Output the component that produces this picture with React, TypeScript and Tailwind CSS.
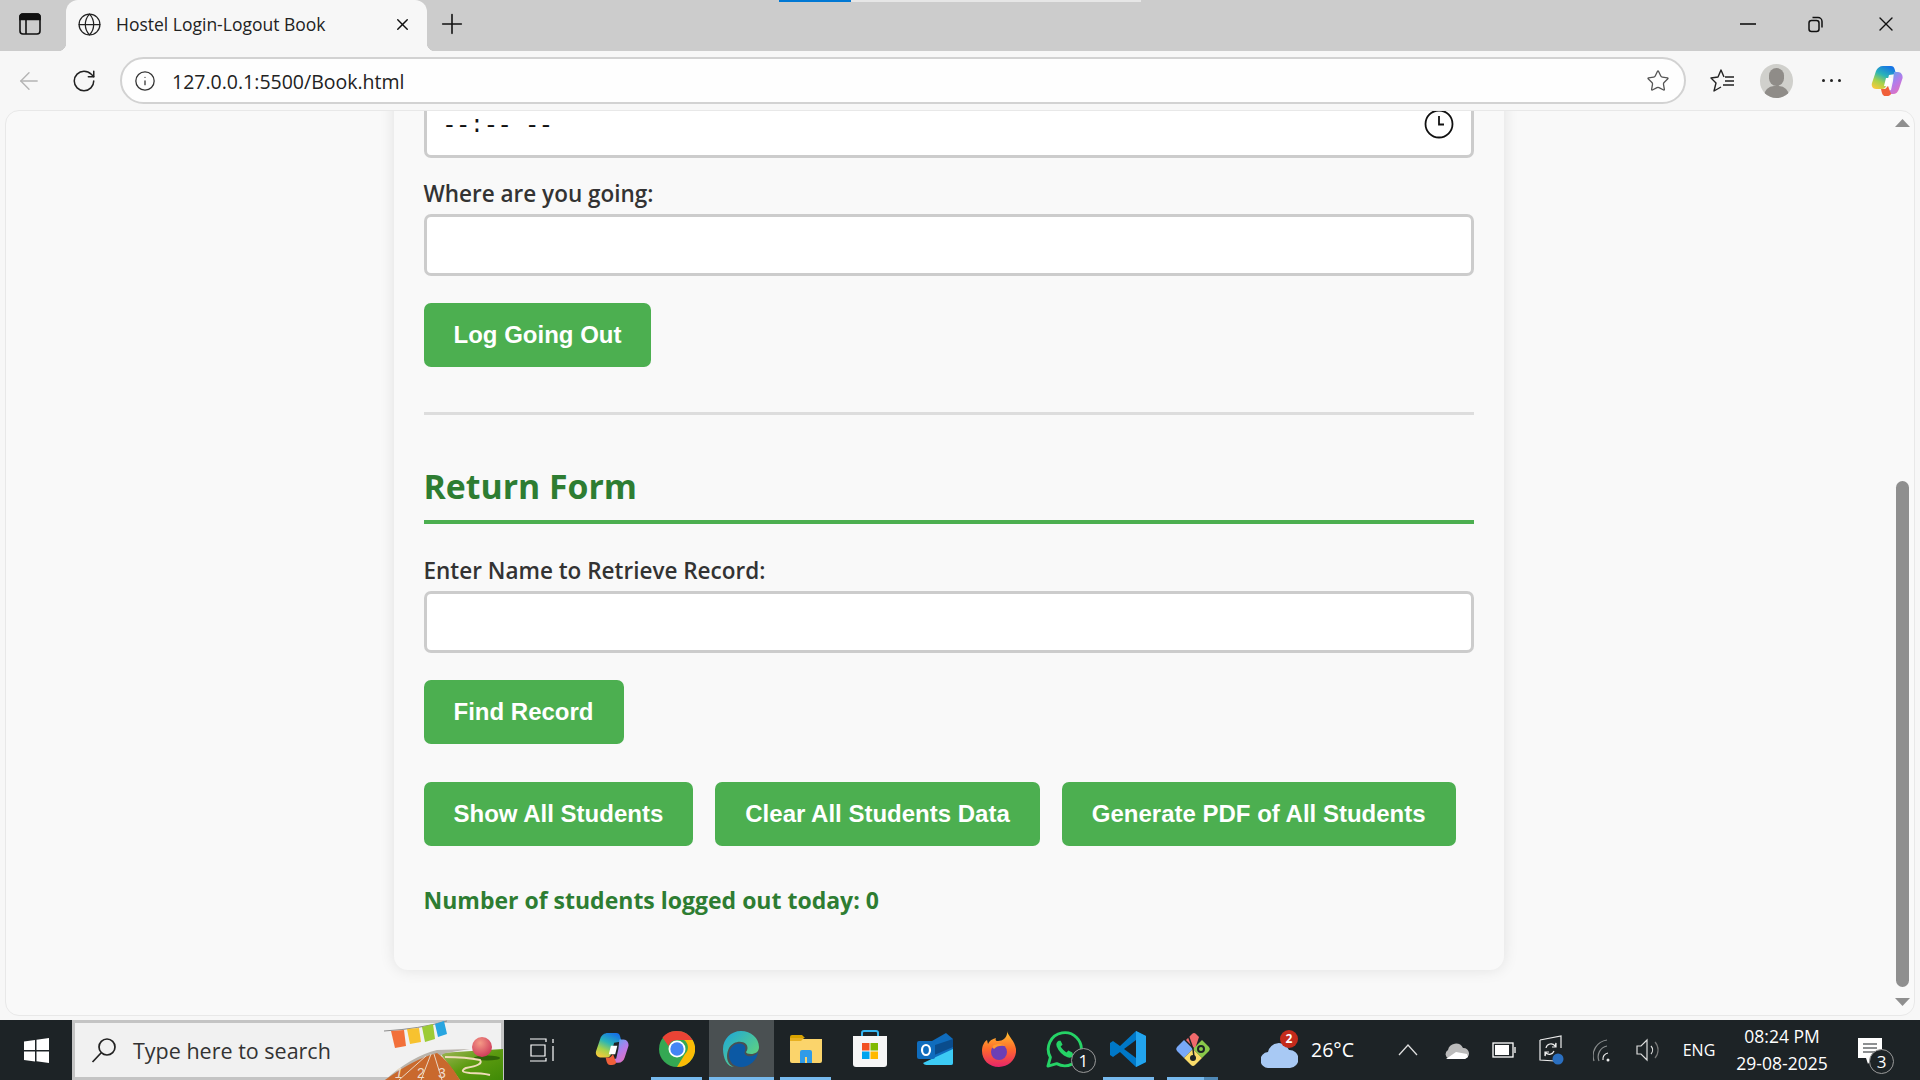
import { ArrowLeft, Globe, Info, Plus, RotateCw, Star, X } from "lucide-react";

const ui = "font-['Open_Sans',sans-serif]";
const arial = "font-['Liberation_Sans',sans-serif]";

function Copilot({ size = 34 }: { size?: number }) {
  return (
    <svg width={size} height={size} viewBox="0 0 34 34">
      <defs>
        <linearGradient id="cpA" x1="0.7" y1="0" x2="0.2" y2="1">
          <stop offset="0" stopColor="#1673e6" />
          <stop offset="0.4" stopColor="#29b4b8" />
          <stop offset="0.7" stopColor="#a6d24a" />
          <stop offset="1" stopColor="#f7c93c" />
        </linearGradient>
        <linearGradient id="cpB" x1="0.2" y1="0" x2="0.8" y2="1">
          <stop offset="0" stopColor="#5aa7f0" />
          <stop offset="0.5" stopColor="#b57bea" />
          <stop offset="1" stopColor="#e86fb8" />
        </linearGradient>
      </defs>
      <path d="M17 2h4c2 0 3 1 3.6 3l1.4 5-7 1-3 11c-.6 2-2 3-4 3H6c-3 0-5-3-4-6l4-12C7 4 10 2 13 2z" fill="url(#cpA)" />
      <path d="M24 8h4c3 0 5 3 4.600 6l-3.600 11c-1 3-3 5-6 5h-4l-1-3 3-1 2-9z" fill="url(#cpB)" />
      <path d="M11 25h4c1-.5 2-2 3-3l3 8c-1 1.500-2 2-4 2h-2c-2 0-3-2-4-7z" fill="#f0603a" />
      <path d="M16 14h6l-2 8h-6z" fill="#fff" />
    </svg>
  );
}

function TaskBtn({ active, open, split, children }: { active?: boolean; open?: boolean; split?: boolean; children: React.ReactNode }) {
  return (
    <div className={`flex h-full w-[64.5px] shrink-0 flex-col items-center ${active ? "bg-[#4a5052]" : ""}`}>
      <div className="flex flex-1 items-center justify-center">{children}</div>
      <div className={`flex h-[3px] ${active ? "w-full" : "w-[51px]"} ${open ? "bg-[#76b9ed]" : ""}`}>
        {split ? <div className="ml-auto h-full w-[14px] bg-[#4f88b5]" /> : null}
      </div>
    </div>
  );
}

function Badge({ n, className }: { n: string; className: string }) {
  return (
    <span className={`absolute flex h-[25px] w-[25px] items-center justify-center rounded-full border border-[#9a9a9a] bg-[#1d2326] text-[17px] leading-none text-white ${ui} ${className}`}>
      {n}
    </span>
  );
}

function Field({ label, mt }: { label: string; mt: string }) {
  return (
    <>
      <label className={`block h-[36px] text-[22.5px] font-semibold leading-[36px] text-[#333] ${mt} ${ui}`}>{label}</label>
      <input type="text" readOnly className="mt-[2px] block h-[62px] w-full rounded-[7px] border-[3px] border-[#ccc] bg-white outline-none" />
    </>
  );
}

function GreenBtn({ children }: { children: React.ReactNode }) {
  return (
    <button className={`h-[64px] rounded-[7px] bg-[#4caf50] px-[30px] text-[24px] font-bold text-white ${arial}`}>{children}</button>
  );
}

function Illustration() {
  return (
    <svg className="absolute bottom-[-3px] right-[-3px]" width="130" height="60" viewBox="0 0 130 60">
      <defs>
        <linearGradient id="grass" x1="0" y1="0" x2="1" y2="1">
          <stop offset="0" stopColor="#a4b85a" />
          <stop offset="0.5" stopColor="#5b9a10" />
          <stop offset="1" stopColor="#3f8a06" />
        </linearGradient>
        <radialGradient id="ball" cx="0.4" cy="0.3" r="0.8">
          <stop offset="0" stopColor="#f59a86" />
          <stop offset="1" stopColor="#c92f55" />
        </radialGradient>
      </defs>
      <path d="M10 11 Q45 9 73 1" stroke="#8a8a8a" strokeWidth="1" fill="none" />
      <path d="M17 11l13-1 2 16-11 2z" fill="#f2703a" />
      <path d="M33 9l12-1 2 14-11 2z" fill="#f7c22f" />
      <path d="M48 7l11-3 2 15-10 3z" fill="#9ccb35" />
      <path d="M61 4l9-3 3 13-9 3z" fill="#28a5e0" />
      <path d="M66 33L129 29V60H86z" fill="url(#grass)" />
      <path d="M11 60 Q38 36 63 30 L96 29 L72 33 Q60 36 60 60z" fill="#b9b3ab" />
      <path d="M11 60 Q40 39 63 33 Q74 40 86 60z" fill="#c9692d" />
      <path d="M25 60L52 36M47 60L57 34M68 60L60 34" stroke="#e8d6c4" strokeWidth="1" fill="none" />
      <text x="21" y="58" fontSize="14" fill="#eedccb" fontFamily="Liberation Sans" fontStyle="italic">1</text>
      <text x="43" y="58" fontSize="14" fill="#eedccb" fontFamily="Liberation Sans">2</text>
      <text x="64" y="58" fontSize="14" fill="#eedccb" fontFamily="Liberation Sans">3</text>
      <ellipse cx="113" cy="38" rx="13" ry="2.500" fill="#2f6408" />
      <path d="M71 37 Q92 37 106 40 Q110 45 92 48 Q84 52 96 53 Q108 53 116 55" stroke="#efdcb8" strokeWidth="2" fill="none" />
      <circle cx="108" cy="27" r="10" fill="url(#ball)" />
    </svg>
  );
}

export default function App() {
  return (
    <div className="flex h-screen w-[1920px] flex-col overflow-hidden bg-[#f7f7f7]">
      {/* tab strip */}
      <div className="relative flex h-[51px] shrink-0 items-center bg-[#cccccc]">
        <div className="absolute left-[779px] top-0 h-[2px] w-[72px] bg-[#0078d4]" />
        <div className="absolute left-[851px] top-0 h-[2px] w-[290px] bg-[#e6e6e6]" />
        <div className="-mt-[3px] flex w-[66px] justify-center pr-[6px]">
          <svg width="22" height="22" viewBox="0 0 22 22" fill="none" stroke="#111" strokeWidth="1.600">
            <rect x="1" y="1" width="20" height="20" rx="3" />
            <path d="M1 3.500a2.500 2.500 0 0 1 2.500-2.500h15a2.500 2.500 0 0 1 2.500 2.500V6.500H1z" fill="#111" />
            <path d="M7 6.500V21" />
          </svg>
        </div>
        <div className="relative flex h-full w-[361px] items-center rounded-t-[12px] bg-[#f7f7f7] pb-[3px] pl-[11px] pr-[15px]">
          <div className="absolute bottom-0 left-[-8px] h-[8px] w-[8px] bg-[radial-gradient(circle_at_0_0,#cccccc_8px,#f7f7f7_8.500px)]" />
          <div className="absolute bottom-0 right-[-8px] h-[8px] w-[8px] bg-[radial-gradient(circle_at_100%_0,#cccccc_8px,#f7f7f7_8.500px)]" />
          <Globe size={25} strokeWidth={1.2} className="text-[#222]" />
          <span className={`ml-[14px] flex-1 text-[17.500px] text-[#222] ${ui}`}>Hostel Login-Logout Book</span>
          <X size={19} strokeWidth={1.8} className="text-[#111]" />
        </div>
        <Plus size={32} strokeWidth={1.2} className="-mt-[3px] ml-[9px] text-[#111]" />
        <div className="-mt-[3px] ml-auto flex items-center pr-[22px]">
          <svg width="16" height="16" viewBox="0 0 16 16" stroke="#111" strokeWidth="1.600" fill="none"><path d="M0 8h16" /></svg>
          <svg className="ml-[52px]" width="16" height="18" viewBox="0 0 16 18" stroke="#111" strokeWidth="1.500" fill="none">
            <rect x="1" y="5.500" width="10" height="11" rx="2.500" />
            <path d="M4.500 2.500h5.500a4 4 0 0 1 4 4v6" />
          </svg>
          <X size={24} strokeWidth={1.4} className="ml-[50px] text-[#111]" />
        </div>
      </div>

      {/* toolbar */}
      <div className="flex h-[59px] shrink-0 items-start bg-[#f7f7f7]">
        <div className="flex h-[59px] w-[120px] items-center">
          <ArrowLeft size={28} strokeWidth={1.2} className="ml-[15px] text-[#b4b4b4]" />
          <RotateCw size={26} strokeWidth={1.4} className="ml-[28px] text-[#222]" />
        </div>
        <div className="mt-[6px] flex h-[47px] w-[1566px] items-center rounded-full border-2 border-[#d2d2d2] bg-[#fefefe] pl-[12px] pr-[14px]">
          <Info size={22} strokeWidth={1.4} className="text-[#333]" />
          <span className={`ml-[16px] flex-1 pt-[2px] text-[19.500px] text-[#222] ${ui}`}>127.0.0.1:5500/Book.html</span>
          <Star size={24} strokeWidth={1.3} className="text-[#555]" />
        </div>
        <div className="flex h-[59px] flex-1 items-center">
          <svg className="ml-[24px]" width="25" height="25" viewBox="0 0 25 25" fill="none" stroke="#222" strokeWidth="1.400">
            <path d="M14 9L11 2 8 9l-7 1 5 5-2 8 7-4" strokeLinejoin="round" />
            <path d="M15 9h9M15 13h9M13 17h11" />
          </svg>
          <div className="relative ml-[25px] h-[34px] w-[33px] overflow-hidden rounded-full bg-[#d0d0cc]">
            <div className="absolute left-[9px] top-[4px] h-[18px] w-[15px] rounded-full bg-[#8f8c88]" />
            <div className="absolute left-[4px] top-[22px] h-[20px] w-[25px] rounded-full bg-[#8f8c88]" />
          </div>
          <div className="ml-[29px] flex gap-[5px]">
            <span className="h-[3px] w-[3px] rounded-full bg-[#222]" />
            <span className="h-[3px] w-[3px] rounded-full bg-[#222]" />
            <span className="h-[3px] w-[3px] rounded-full bg-[#222]" />
          </div>
          <div className="ml-[29px]"><Copilot /></div>
        </div>
      </div>

      {/* page viewport */}
      <div className="ml-[5px] mr-[5px] flex min-h-0 flex-1 overflow-hidden rounded-[14px] border border-[#e8e8e8] bg-[#f9f9f9]">
        <main className="flex flex-1 justify-center pr-[2px]">
          <div className="-mt-[54px] h-fit w-[1110px] rounded-[14px] bg-[#f9f9f9] px-[30px] pb-[52px] pt-[40px] shadow-[0_0_15px_rgba(0,0,0,0.1)]">
            <div className="flex h-[61px] items-center justify-between rounded-[7px] border-[3px] border-[#ccc] bg-white pb-[7px] pl-[16px] pr-[17px]">
              <span className="mt-[4px] font-['Liberation_Mono',monospace] text-[23px] text-[#111]">--:-- --</span>
              <svg width="30" height="30" viewBox="0 0 30 30" fill="none" stroke="#111" strokeWidth="1.800"><circle cx="15" cy="15" r="13.500" /><path d="M15 7v8.500h5" /></svg>
            </div>
            <Field label="Where are you going:" mt="mt-[18px]" />
            <div className="mt-[27px]"><GreenBtn>Log Going Out</GreenBtn></div>
            <hr className="mt-[45px] h-[3px] border-0 bg-[#ddd]" />
            <h2 className={`mt-[47px] border-b-4 border-[#4caf50] pb-[10px] text-[33.800px] font-bold leading-[48px] text-[#2e7d32] ${ui}`}>Return Form</h2>
            <Field label="Enter Name to Retrieve Record:" mt="mt-[29px]" />
            <div className="mt-[27px]"><GreenBtn>Find Record</GreenBtn></div>
            <div className="mt-[38px] flex gap-[22px]">
              <GreenBtn>Show All Students</GreenBtn>
              <GreenBtn>Clear All Students Data</GreenBtn>
              <GreenBtn>Generate PDF of All Students</GreenBtn>
            </div>
            <p className={`mt-[36px] text-[23px] font-bold leading-[36px] text-[#2e7d32] ${ui}`}>Number of students logged out today: 0</p>
          </div>
        </main>
        <div className="flex w-[21px] shrink-0 flex-col items-center pr-[2px]">
          <svg className="mt-[8px]" width="15" height="8" viewBox="0 0 15 8"><path d="M7.500 0L15 8H0z" fill="#8f8f8f" /></svg>
          <div className="mt-[354px] h-[506px] w-[13px] rounded-full bg-[#8f8f8f]" />
          <svg className="mt-[11px]" width="15" height="8" viewBox="0 0 15 8"><path d="M0 0h15L7.500 8z" fill="#8f8f8f" /></svg>
        </div>
      </div>

      {/* taskbar */}
      <div className="mt-[4px] flex h-[60px] shrink-0 items-center bg-[#1d2326] text-white">
        <div className="flex h-full w-[72px] items-center justify-center">
          <svg width="25" height="25" viewBox="0 0 25 25" fill="#fff"><path d="M0 3.500l11-1.500v10H0zM12.500 1.800L25 0v12h-12.500zM0 13.500h11v10L0 22zM12.500 13.500H25V25l-12.500-1.800z" /></svg>
        </div>
        <div className="relative flex h-full w-[432px] items-center border-[3px] border-[#c4c4c4] bg-[#f1f1f1] pl-[16px]">
          <svg width="26" height="26" viewBox="0 0 26 26" fill="none" stroke="#222" strokeWidth="1.700"><circle cx="16" cy="10" r="8" /><path d="M10 16L1.500 25" /></svg>
          <span className={`ml-[16px] pt-[3px] text-[21.500px] text-[#333] ${ui}`}>Type here to search</span>
          <Illustration />
        </div>
        <div className="flex h-full w-[76px] items-center justify-center">
          <svg width="24" height="24" viewBox="0 0 24 24" fill="none" stroke="#fff" strokeWidth="1.200">
            <path d="M0 1h16v3M0 23h16v-3M1 7h14v11H1zM23 1v4M23 8v15" />
          </svg>
        </div>
        <TaskBtn><Copilot size={36} /></TaskBtn>
        <TaskBtn open>
          <svg width="36" height="36" viewBox="0 0 36 36">
            <circle cx="18" cy="18" r="18" fill="#34a853" />
            <path d="M18 0a18 18 0 0 1 15.600 9H18a9 9 0 0 0-8.500 6L3.500 6.500A18 18 0 0 1 18 0z" fill="#ea4335" />
            <path d="M33.600 9A18 18 0 0 1 18 36l8-13a9 9 0 0 0-1-14z" fill="#fbbc05" />
            <circle cx="18" cy="18" r="8.500" fill="#fff" /><circle cx="18" cy="18" r="6.700" fill="#4285f4" />
          </svg>
        </TaskBtn>
        <TaskBtn active open>
          <svg width="36" height="36" viewBox="0 0 36 36">
            <defs><linearGradient id="edgeT" x1="0" y1="0" x2="1" y2="1"><stop offset="0" stopColor="#1ba6dd" /><stop offset="1" stopColor="#6fdc6a" /></linearGradient></defs>
            <path d="M18 0c10 0 18 7 18 16 0 5-4 7-8 7-3 0-5-1-5-2 2-2 2-6 0-8-4-4-13-3-17 4-1 2-2 5-2 8 0 7 4 10 7 11C4 36 0 27 0 18 0 8 8 0 18 0z" fill="url(#edgeT)" />
            <path d="M6 24c0-8 7-13 13-11 3 1 4 4 3 7-2 4 3 6 7 5 3-1 5-2 6-4-1 8-8 15-17 15-7 0-12-5-12-12z" fill="#0c59a4" />
          </svg>
        </TaskBtn>
        <TaskBtn open>
          <svg width="32" height="30" viewBox="0 0 32 30">
            <path d="M0 3a2 2 0 0 1 2-2h10l3 3h-15z" fill="#d9a300" />
            <path d="M0 5h32v22a2 2 0 0 1-2 2H2a2 2 0 0 1-2-2z" fill="#fbd46b" />
            <path d="M0 4h14l-3 3H0z" fill="#e8b020" />
            <path d="M10 29V18a2 2 0 0 1 2-2h8a2 2 0 0 1 2 2v11h-5v-6h-2v6z" fill="#2f9be8" />
          </svg>
        </TaskBtn>
        <TaskBtn>
          <svg width="36" height="38" viewBox="0 0 36 38">
            <path d="M10 8V3a2 2 0 0 1 2-2h12a2 2 0 0 1 2 2v5" fill="none" stroke="#35b5f0" strokeWidth="2" />
            <path d="M1 6h34v28a3 3 0 0 1-3 3H4a3 3 0 0 1-3-3z" fill="#f6f6f6" />
            <rect x="10" y="13" width="7.500" height="7.500" fill="#f25022" /><rect x="18.500" y="13" width="7.500" height="7.500" fill="#7fba00" />
            <rect x="10" y="21.500" width="7.500" height="7.500" fill="#00a4ef" /><rect x="18.500" y="21.500" width="7.500" height="7.500" fill="#ffb900" />
          </svg>
        </TaskBtn>
        <TaskBtn>
          <svg width="36" height="34" viewBox="0 0 36 34">
            <path d="M15 9l14-8 7 6v24a2 2 0 0 1-2 2H18a3 3 0 0 1-3-3z" fill="#0f6cbd" />
            <path d="M15 14l21-7v8L15 24z" fill="#0a4c8c" />
            <path d="M6 31l30-14v14a2 2 0 0 1-2 2H10a4 4 0 0 1-4-2z" fill="#3ccbf4" />
            <rect x="0" y="9" width="18" height="18" rx="2" fill="#0f6cbd" />
            <ellipse cx="9" cy="18" rx="4" ry="5" fill="none" stroke="#fff" strokeWidth="2.200" />
          </svg>
        </TaskBtn>
        <TaskBtn>
          <svg width="34" height="36" viewBox="0 0 34 36">
            <defs><linearGradient id="ffx" x1="0.5" y1="0" x2="0.5" y2="1"><stop offset="0" stopColor="#ffc52e" /><stop offset="0.5" stopColor="#ff6a2b" /><stop offset="1" stopColor="#e6246a" /></linearGradient></defs>
            <path d="M25 0c1 5 8 10 9 18 1 10-7 18-17 18S0 29 0 20c0-5 2-9 5-11l1 4c1-3 4-5 8-6-1 2 0 3 2 3 5 0 10-4 9-10z" fill="url(#ffx)" />
            <circle cx="17" cy="21" r="8" fill="#6b3fb5" />
            <path d="M10 16c3-4 10-4 13-1-4-1-9 0-11 3z" fill="#ff9a2e" />
          </svg>
        </TaskBtn>
        <TaskBtn>
          <div className="relative h-[46px] w-[46px]">
            <svg className="absolute left-[5px] top-[5px]" width="37" height="37" viewBox="0 0 38 38" fill="none">
              <path d="M2 36l2.500-9A17 17 0 1 1 11 33.500z" stroke="#25d366" strokeWidth="3" strokeLinejoin="round" />
              <path d="M13 10c-2 1-3 3-2 6 2 5 6 9 11 11 3 1 5 0 6-2l-1-3-4-2-2 2c-2-1-5-4-6-6l2-2-2-4z" fill="#25d366" />
            </svg>
            <Badge n="1" className="left-[30px] top-[22px]" />
          </div>
        </TaskBtn>
        <TaskBtn open>
          <svg width="36" height="36" viewBox="0 0 36 36">
            <path d="M26 0l10 5v26l-10 5L10 21 3 26l-3-2v-12l3-2 7 5z" fill="#0078c8" />
            <path d="M26 0l10 5v26l-10 5z" fill="#22a4ee" />
            <path d="M26 9L14 18l12 9z" fill="#1d2326" />
          </svg>
        </TaskBtn>
        <TaskBtn open split>
          <svg width="36" height="36" viewBox="0 0 36 36">
            <path d="M18 18L9 9l6-6a3 3 0 0 1 4 0l3 3z" fill="#f0696c" transform="translate(2 0)" />
            <path d="M9 9l9 9-9 9-7-7a3 3 0 0 1 0-4z" fill="#78a8f8" />
            <path d="M27 9l7 7a3 3 0 0 1 0 4l-7 7-9-9z" fill="#8ac84a" />
            <path d="M9 27l9-9 9 9-7 7a3 3 0 0 1-4 0z" fill="#fadc6a" />
            <path d="M13 4l5 14 1 8" stroke="#1d2326" strokeWidth="1.500" fill="none" />
            <circle cx="18" cy="27" r="3" fill="#1d2326" />
            <circle cx="26" cy="18" r="3" fill="none" stroke="#1d2326" strokeWidth="2" />
          </svg>
        </TaskBtn>

        {/* weather + tray */}
        <div className="relative ml-[36px] h-[40px] w-[40px] shrink-0">
          <svg className="absolute bottom-[2px] left-0" width="37" height="26" viewBox="0 0 37 26"><path d="M8 26a8 8 0 0 1-1-16 11 11 0 0 1 21-2 9 9 0 0 1 1 18z" fill="#a8c9f4" /></svg>
          <span className={`absolute right-[3px] top-[0px] flex h-[18px] w-[18px] items-center justify-center rounded-full bg-[#c42b1c] text-[12px] font-bold text-white ${ui}`}>2</span>
        </div>
        <span className={`ml-[10px] w-[43px] whitespace-nowrap text-[19.500px] ${ui}`}>26°C</span>
        <div className="ml-[30px] flex">
          <div className="flex h-[24px] w-[48px] items-center justify-center">
            <svg width="20" height="12" viewBox="0 0 20 12" fill="none" stroke="#ddd" strokeWidth="1.300"><path d="M1 11l9-10 9 10" /></svg>
          </div>
          <div className="flex h-[24px] w-[48px] items-center justify-center">
            <svg width="25" height="18" viewBox="0 0 25 18"><path d="M5 18a5 5 0 0 1-1-9 8 8 0 0 1 15-2 5.500 5.500 0 0 1 1 11z" fill="#bbb" /><path d="M2 18l10-7 11 2 1 3-3 2z" fill="#fff" /></svg>
          </div>
          <div className="flex h-[24px] w-[48px] items-center justify-center">
            <svg width="24" height="16" viewBox="0 0 24 16" fill="none" stroke="#fff" strokeWidth="1.300"><rect x="1" y="1" width="20" height="14" /><rect x="3" y="3" width="14" height="10" fill="#fff" stroke="none" /><path d="M23 5v6" /></svg>
          </div>
          <div className="flex h-[24px] w-[48px] items-center justify-center">
            <svg width="26" height="30" viewBox="0 0 26 30" fill="none" stroke="#eee" strokeWidth="1.200">
              <path d="M1 5l21-4v4M1 5v20l15 1M1 25" />
              <path d="M22 5v8M7 13a5 5 0 0 1 9-2l1-3v4h-4M15 16a5 5 0 0 1-8 2l-1 3v-4h4" />
              <circle cx="19" cy="24" r="5.500" fill="#2a6fc0" stroke="none" />
            </svg>
          </div>
          <div className="flex h-[24px] w-[48px] items-center justify-center pl-[3px]">
            <svg width="18" height="24" viewBox="0 0 18 24" fill="none" stroke="#8a8d8e" strokeWidth="1.200">
              <path d="M1 23A16 16 0 0 1 14 2M6 23a11 11 0 0 1 8-15" />
              <path d="M10 22a6 6 0 0 1 5-7" stroke="#eee" />
              <circle cx="15" cy="22" r="1.500" fill="#eee" stroke="none" />
            </svg>
          </div>
          <div className="flex h-[24px] w-[48px] items-center justify-center">
            <svg width="24" height="24" viewBox="0 0 24 24" fill="none" stroke="#ddd" strokeWidth="1.200">
              <path d="M1 8h4l6-6v20l-6-6H1z" />
              <path d="M15 8a6 6 0 0 1 0 8" />
              <path d="M19 4a12 12 0 0 1 0 16" stroke="#777" />
            </svg>
          </div>
        </div>
        <span className={`w-[54px] text-center text-[16px] ${ui}`}>ENG</span>
        <div className={`flex w-[112px] flex-col items-center text-[17.500px] leading-[27px] ${ui}`}>
          <span>08:24 PM</span>
          <span>29-08-2025</span>
        </div>
        <div className="flex w-[64px] justify-center">
          <div className="relative h-[42px] w-[36px]">
            <svg className="absolute left-[6px] top-[9px]" width="25" height="27" viewBox="0 0 25 27">
              <path d="M0 0h24v20H14l-4 6-2-6H0z" fill="#fff" />
              <path d="M5 6h14M5 10h14M5 14h14" stroke="#1d2326" strokeWidth="1.200" />
            </svg>
            <Badge n="3" className="left-[17px] top-[20px]" />
          </div>
        </div>
      </div>
    </div>
  );
}
